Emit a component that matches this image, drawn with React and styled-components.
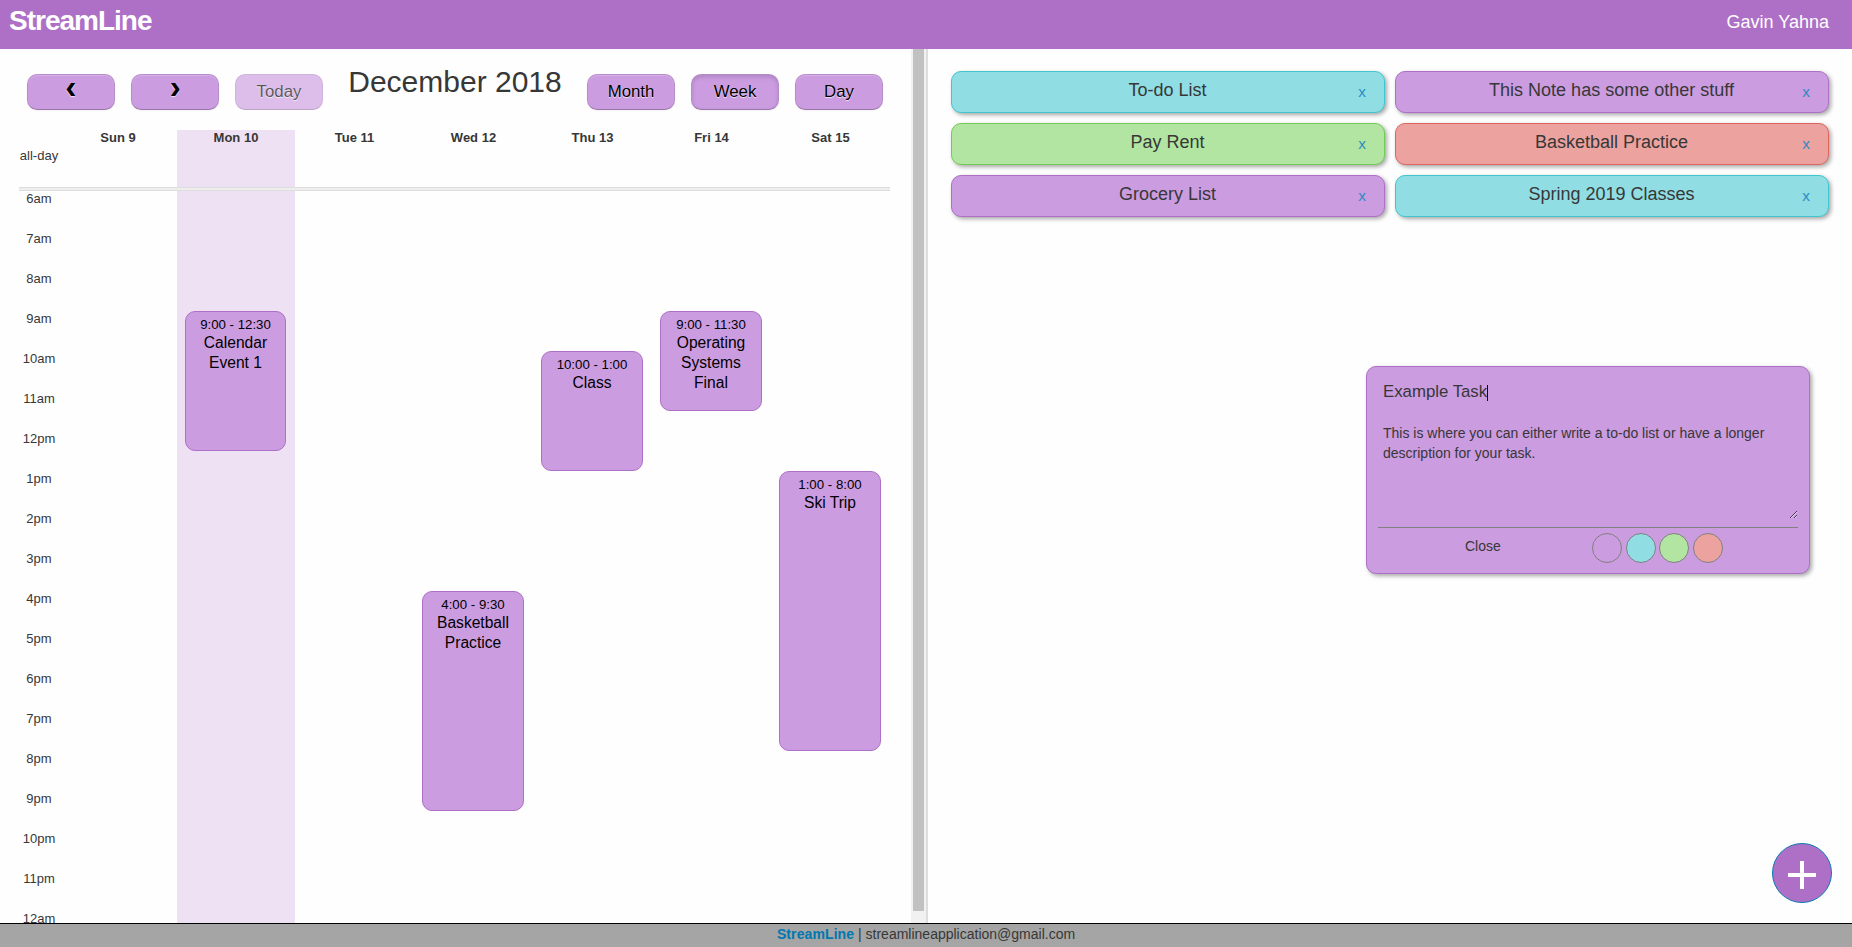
import React from "react";
import styled, { createGlobalStyle, css } from "styled-components";

const palette = {
  purple: { fill: "#cc9ce1", edge: "#ae70c6" },
  blue: { fill: "#90dee3", edge: "#3fc6cf" },
  green: { fill: "#b3e5a2", edge: "#71cc56" },
  red: { fill: "#eca3a0", edge: "#de6460" },
};

const GlobalStyle = createGlobalStyle`
  *, *::before, *::after { box-sizing: border-box; }
  body {
    margin: 0;
    background: #fefefe;
    color: #373737;
    font-family: "Liberation Sans", Arial, Helvetica, sans-serif;
    font-size: 14px;
    line-height: 20px;
  }
`;

const Page = styled.div`
  display: flex;
  flex-direction: column;
  height: 100vh;
  overflow: hidden;
`;

const Header = styled.header`
  display: flex;
  justify-content: space-between;
  flex: 0 0 49px;
  padding: 0 23px 0 9px;
  background: #ae70c6;
  color: #fff;
`;

const Brand = styled.h1`
  margin: 0;
  font-size: 28px;
  line-height: 42px;
  letter-spacing: -1px;
`;

const UserName = styled.span`
  font-size: 18px;
  line-height: 44px;
`;

const Main = styled.main`
  display: flex;
  flex: 1;
  min-height: 0;
`;

const CalendarPane = styled.section`
  flex: 0 0 911px;
  padding: 16px 21px 0 19px;
  overflow: hidden;
`;

const Toolbar = styled.div`
  display: flex;
  justify-content: space-between;
  height: 65px;
  padding: 0 7px 0 8px;
`;

const ButtonGroup = styled.div`
  display: flex;
  gap: 16px;
  padding-top: 9px;
`;

const Button = styled.button`
  width: 88px;
  height: 36px;
  padding: 0;
  border: 1px solid;
  border-color: rgba(0, 0, 0, 0.1) rgba(0, 0, 0, 0.1) rgba(0, 0, 0, 0.25);
  border-radius: 10px;
  background-color: ${palette.purple.fill};
  color: #000;
  font: 16.8px/32px "Liberation Sans", Arial, sans-serif;
  text-shadow: 0 1px 1px rgba(255, 255, 255, 0.75);
  box-shadow: inset 0 1px 0 rgba(255, 255, 255, 0.2), 0 1px 2px rgba(0, 0, 0, 0.05);
  ${(p) =>
    p.$active &&
    css`
      box-shadow: inset 0 2px 4px rgba(0, 0, 0, 0.15), 0 1px 2px rgba(0, 0, 0, 0.05);
    `}
  ${(p) =>
    p.disabled &&
    css`
      opacity: 0.65;
      box-shadow: none;
    `}
`;

const Chevron = styled.span`
  display: block;
  height: 34px;
  font-family: "Liberation Mono", "Courier New", monospace;
  font-size: 33.6px;
  font-weight: bold;
  line-height: 28px;
`;

const Title = styled.h2`
  margin: 0;
  font-size: 30px;
  font-weight: normal;
  line-height: 33px;
`;

const WeekGrid = styled.div`
  display: grid;
  grid-template-columns: 40px 118px 118px repeat(5, 119px);
  grid-template-rows: 16px 41px 4px repeat(38, 20px);
  font-size: 13px;
`;

const TodayShade = styled.div`
  grid-column: 3;
  grid-row: 1 / -1;
  background: #eee1f4;
`;

const DayHead = styled.div`
  grid-column: ${(p) => p.$col};
  grid-row: 1;
  font-weight: bold;
  line-height: 15px;
  text-align: center;
`;

const AllDay = styled.div`
  grid-column: 1;
  grid-row: 2;
  text-align: center;
  line-height: 20px;
`;

const Divider = styled.div`
  grid-column: 1 / -1;
  grid-row: 3;
  border: solid #ddd;
  border-width: 1px 0;
  background: #eee;
`;

const Hour = styled.div`
  grid-column: 1;
  grid-row: ${(p) => p.$row};
  text-align: center;
  line-height: 15px;
`;

const EventCard = styled.article`
  grid-column: ${(p) => p.$col};
  grid-row: ${(p) => p.$row} / span ${(p) => p.$span};
  margin: 0 9px 0 8px;
  padding: 5px 10px;
  border: 1px solid ${palette.purple.edge};
  border-radius: 10px;
  background: ${palette.purple.fill};
  color: #000;
  text-align: center;
`;

const EventTime = styled.div`
  font-size: 13.26px;
  line-height: 16px;
  white-space: nowrap;
`;

const EventName = styled.div`
  font-size: 15.6px;
  line-height: 20px;
`;

const ScrollTrack = styled.div`
  flex: 0 0 15px;
  padding: 0 2px 12px;
  background: #f1f1f1;
`;

const ScrollThumb = styled.div`
  height: 100%;
  background: #c1c1c1;
`;

const NotesPane = styled.section`
  position: relative;
  flex: 1;
  padding: 22px 23px 0;
  border-left: 2px solid #ddd;
`;

const NoteGrid = styled.div`
  display: grid;
  grid-template-columns: 1fr 1fr;
  gap: 10px;
`;

const Note = styled.article`
  display: grid;
  grid-template-columns: 18px 1fr 18px;
  height: 42px;
  border: 1px solid ${(p) => palette[p.$tone].edge};
  border-radius: 10px;
  background: ${(p) => palette[p.$tone].fill};
  box-shadow: 2px 2px 4px rgba(0, 0, 0, 0.35);
`;

const NoteTitle = styled.h3`
  grid-column: 2;
  grid-row: 1;
  margin: 0;
  padding-right: 1px;
  font-size: 18px;
  font-weight: normal;
  line-height: 36px;
  text-align: center;
`;

const NoteClose = styled.a`
  grid-column: 2;
  grid-row: 1;
  justify-self: end;
  color: #2d8cc4;
  font-size: 15.4px;
  line-height: 39px;
`;

const Editor = styled.form`
  position: absolute;
  top: 317px;
  right: 42px;
  width: 444px;
  height: 208px;
  padding: 11px 11px 0;
  border: 1px solid ${palette.purple.edge};
  border-radius: 10px;
  background: ${palette.purple.fill};
  box-shadow: 2px 2px 4px rgba(0, 0, 0, 0.35);
`;

const EditorTitle = styled.div`
  display: flex;
  align-items: center;
  height: 28px;
  padding-left: 5px;
  font-size: 16.8px;
`;

const Caret = styled.span`
  width: 1px;
  height: 16px;
  margin-top: 2px;
  background: #000;
`;

const EditorBody = styled.div`
  display: flex;
  flex-direction: column;
  justify-content: space-between;
  height: 122px;
  padding: 17px 0 8px 5px;
  border-bottom: 1px solid #808080;
`;

const EditorText = styled.p`
  margin: 0;
  padding-right: 20px;
`;

const ResizeGrip = styled.svg`
  display: block;
  align-self: flex-end;
  width: 8px;
  height: 8px;
  margin-right: 1px;
`;

const EditorFooter = styled.div`
  display: flex;
  padding: 5px 0 0 87px;
`;

const CloseLabel = styled.span`
  width: 127px;
  line-height: 27px;
`;

const Swatches = styled.div`
  display: flex;
  gap: 3.7px;
`;

const Swatch = styled.span`
  width: 30px;
  height: 30px;
  border: 1px solid #808080;
  border-radius: 50%;
  background: ${(p) => palette[p.$tone].fill};
`;

const AddButton = styled.button`
  position: absolute;
  right: 20px;
  bottom: 20px;
  display: grid;
  place-items: center;
  width: 60px;
  height: 60px;
  padding: 4px 0 0;
  border: 1px solid #0a7ab5;
  border-radius: 50%;
  background: #ae70c6;
`;

const Footer = styled.footer`
  flex: 0 0 24px;
  border-top: 1px solid #000;
  background: #a5a5a5;
  text-align: center;
`;

const FooterBrand = styled.a`
  color: #0078b0;
  font-weight: bold;
  letter-spacing: 0.1px;
`;

const days = ["Sun 9", "Mon 10", "Tue 11", "Wed 12", "Thu 13", "Fri 14", "Sat 15"];

const hours = [
  "6am", "7am", "8am", "9am", "10am", "11am", "12pm", "1pm", "2pm", "3pm",
  "4pm", "5pm", "6pm", "7pm", "8pm", "9pm", "10pm", "11pm", "12am",
];

const FIRST_HOUR = 6;
const FIRST_ROW = 4;

// start and end are hours on a 24-hour clock; day is the column index from Sunday
const events = [
  { day: 1, start: 9, end: 12.5, time: "9:00 - 12:30", name: "Calendar Event 1" },
  { day: 3, start: 16, end: 21.5, time: "4:00 - 9:30", name: "Basketball Practice" },
  { day: 4, start: 10, end: 13, time: "10:00 - 1:00", name: "Class" },
  { day: 5, start: 9, end: 11.5, time: "9:00 - 11:30", name: "Operating Systems Final" },
  { day: 6, start: 13, end: 20, time: "1:00 - 8:00", name: "Ski Trip" },
];

const notes = [
  { title: "To-do List", tone: "blue" },
  { title: "This Note has some other stuff", tone: "purple" },
  { title: "Pay Rent", tone: "green" },
  { title: "Basketball Practice", tone: "red" },
  { title: "Grocery List", tone: "purple" },
  { title: "Spring 2019 Classes", tone: "blue" },
];

const rowFor = (hour) => FIRST_ROW + (hour - FIRST_HOUR) * 2;

export default function App() {
  return (
    <Page>
      <GlobalStyle />
      <Header>
        <Brand>StreamLine</Brand>
        <UserName>Gavin Yahna</UserName>
      </Header>
      <Main>
        <CalendarPane>
          <Toolbar>
            <ButtonGroup>
              <Button aria-label="Previous"><Chevron>‹</Chevron></Button>
              <Button aria-label="Next"><Chevron>›</Chevron></Button>
              <Button disabled>Today</Button>
            </ButtonGroup>
            <Title>December 2018</Title>
            <ButtonGroup>
              <Button>Month</Button>
              <Button $active>Week</Button>
              <Button>Day</Button>
            </ButtonGroup>
          </Toolbar>
          <WeekGrid>
            <TodayShade />
            {days.map((d, i) => (
              <DayHead key={d} $col={i + 2}>{d}</DayHead>
            ))}
            <AllDay>all-day</AllDay>
            <Divider />
            {hours.map((h, i) => (
              <Hour key={h} $row={FIRST_ROW + i * 2}>{h}</Hour>
            ))}
            {events.map((e) => (
              <EventCard
                key={e.name}
                $col={e.day + 2}
                $row={rowFor(e.start)}
                $span={(e.end - e.start) * 2}
              >
                <EventTime>{e.time}</EventTime>
                <EventName>{e.name}</EventName>
              </EventCard>
            ))}
          </WeekGrid>
        </CalendarPane>
        <ScrollTrack>
          <ScrollThumb />
        </ScrollTrack>
        <NotesPane>
          <NoteGrid>
            {notes.map((n) => (
              <Note key={n.title} $tone={n.tone}>
                <NoteTitle>{n.title}</NoteTitle>
                <NoteClose>x</NoteClose>
              </Note>
            ))}
          </NoteGrid>
          <Editor>
            <EditorTitle>
              Example Task
              <Caret />
            </EditorTitle>
            <EditorBody>
              <EditorText>
                This is where you can either write a to-do list or have a longer description for your task.
              </EditorText>
              <ResizeGrip viewBox="0 0 8 8" shapeRendering="crispEdges">
                <path d="M0.5 7.5L7.5 0.5M4.5 7.5L7.5 4.5" stroke="#47364e" fill="none" />
                <path d="M1.5 7.5L7.5 1.5M5.5 7.5L7.5 5.5" stroke="#e8d3f0" fill="none" />
              </ResizeGrip>
            </EditorBody>
            <EditorFooter>
              <CloseLabel>Close</CloseLabel>
              <Swatches>
                <Swatch $tone="purple" />
                <Swatch $tone="blue" />
                <Swatch $tone="green" />
                <Swatch $tone="red" />
              </Swatches>
            </EditorFooter>
          </Editor>
          <AddButton type="button" aria-label="Add note">
            <svg width="28" height="28" viewBox="0 0 28 28">
              <path d="M0 14H28M14 0V28" stroke="#fff" strokeWidth="4" />
            </svg>
          </AddButton>
        </NotesPane>
      </Main>
      <Footer>
        <FooterBrand>StreamLine</FooterBrand> | streamlineapplication@gmail.com
      </Footer>
    </Page>
  );
}
